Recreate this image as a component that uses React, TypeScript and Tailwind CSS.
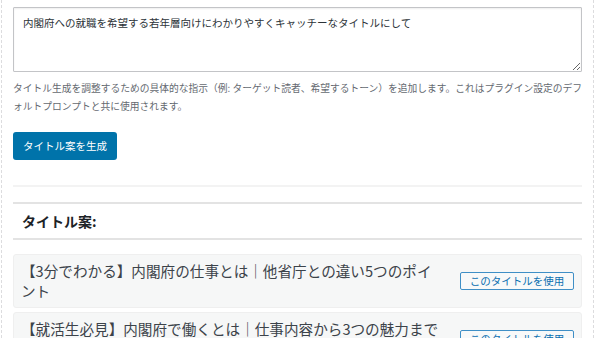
import React from "react";

const jp = { fontFamily: '"Noto Sans CJK JP", "Noto Sans", sans-serif' };

const suggestions = [
  "【3分でわかる】内閣府の仕事とは｜他省庁との違い5つのポイント",
  "【就活生必見】内閣府で働くとは｜仕事内容から3つの魅力まで徹底解説",
];

function SuggestionCard({ title }: { title: string }) {
  return (
    <div className="flex items-center gap-[17px] rounded-[3px] border border-[#efefef] bg-[#f6f7f7] py-[6px] pl-[7px] pr-[7px]">
      <p className="flex-1 text-[14.625px] leading-[20px] text-[#3c434a]">{title}</p>
      <button className="h-[18px] w-[114px] shrink-0 rounded-[2px] border border-[#3f8fc6] bg-[#f8f9f9] text-[10.5px] leading-none text-[#0a6fb0]">
        このタイトルを使用
      </button>
    </div>
  );
}

export default function App() {
  return (
    <div className="h-[338px] overflow-hidden bg-white" style={jp}>
      <div className="ml-px h-full w-[593px] border-x border-dashed border-[#dcdcde] pl-[11px] pr-[11px] pt-[7px]">
        <textarea
          readOnly
          defaultValue="内閣府への就職を希望する若年層向けにわかりやすくキャッチーなタイトルにして"
          className="block h-[65px] w-full rounded-[1px] border border-[#c3c4c7] px-[9px] py-[8px] text-[10.5px] leading-[14px] text-[#2c3338] shadow-[inset_0_1px_2px_rgba(0,0,0,0.07)] outline-none"
          style={jp}
        />
        <p className="mt-[7px] text-[9.75px] leading-[18px] text-[#646970]">
          タイトル生成を調整するための具体的な指示（例: ターゲット読者、希望するトーン）を追加します。これはプラグイン設定のデフォルトプロンプトと共に使用されます。
        </p>
        <button className="mt-[17px] h-[28px] w-[104px] rounded-[3px] bg-[#0073aa] text-[10.5px] text-white">
          タイトル案を生成
        </button>
        <div className="mt-[25px] h-[2px] bg-[#f3f3f3]" />
        <h2 className="mt-[15px] border-y-2 border-[#e3e3e3] py-[7px] pl-[9px] text-[14px] font-bold leading-[20px] text-[#1d2327]">
          タイトル案:
        </h2>
        <div className="mt-[14px] flex flex-col gap-[4px]">
          {suggestions.map((t) => (
            <SuggestionCard key={t} title={t} />
          ))}
        </div>
      </div>
    </div>
  );
}
